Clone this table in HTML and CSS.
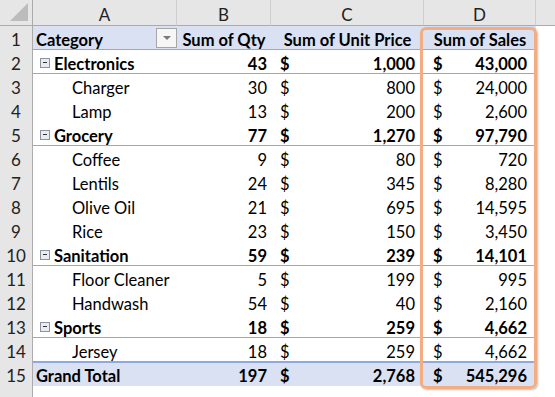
FILE: index.html
```html
<!DOCTYPE html>
<html lang="en">
<head>
    <meta charset="UTF-8">
    <title>Pivot table - Sum of Sales</title>
    <link rel="stylesheet" href="styles.css">
</head>
<body>
    <div class="sheet">
        <div class="row colhead">
            <div class="corner"><span class="tri"></span></div>
            <div class="ch">A</div>
            <div class="ch">B</div>
            <div class="ch">C</div>
            <div class="ch">D</div>
            <div class="ch last"></div>
        </div>

        <div class="row head line">
            <div class="rn">1</div>
            <div class="c field">Category <span class="filter"><span class="arrow"></span></span></div>
            <div class="c hd">Sum of Qty</div>
            <div class="c hd">Sum of Unit Price</div>
            <div class="c hd">Sum of Sales</div>
            <div class="e"></div>
        </div>

        <div class="row group line">
            <div class="rn">2</div>
            <div class="c label"><span class="minus"></span>Electronics</div>
            <div class="c num">43</div>
            <div class="c money"><span>$</span><span>1,000</span></div>
            <div class="c money"><span>$</span><span>43,000</span></div>
            <div class="e"></div>
        </div>
        <div class="row">
            <div class="rn">3</div>
            <div class="c item">Charger</div>
            <div class="c num">30</div>
            <div class="c money"><span>$</span><span>800</span></div>
            <div class="c money"><span>$</span><span>24,000</span></div>
            <div class="e"></div>
        </div>
        <div class="row">
            <div class="rn">4</div>
            <div class="c item">Lamp</div>
            <div class="c num">13</div>
            <div class="c money"><span>$</span><span>200</span></div>
            <div class="c money"><span>$</span><span>2,600</span></div>
            <div class="e"></div>
        </div>

        <div class="row group line">
            <div class="rn">5</div>
            <div class="c label"><span class="minus"></span>Grocery</div>
            <div class="c num">77</div>
            <div class="c money"><span>$</span><span>1,270</span></div>
            <div class="c money"><span>$</span><span>97,790</span></div>
            <div class="e"></div>
        </div>
        <div class="row">
            <div class="rn">6</div>
            <div class="c item">Coffee</div>
            <div class="c num">9</div>
            <div class="c money"><span>$</span><span>80</span></div>
            <div class="c money"><span>$</span><span>720</span></div>
            <div class="e"></div>
        </div>
        <div class="row">
            <div class="rn">7</div>
            <div class="c item">Lentils</div>
            <div class="c num">24</div>
            <div class="c money"><span>$</span><span>345</span></div>
            <div class="c money"><span>$</span><span>8,280</span></div>
            <div class="e"></div>
        </div>
        <div class="row">
            <div class="rn">8</div>
            <div class="c item">Olive Oil</div>
            <div class="c num">21</div>
            <div class="c money"><span>$</span><span>695</span></div>
            <div class="c money"><span>$</span><span>14,595</span></div>
            <div class="e"></div>
        </div>
        <div class="row">
            <div class="rn">9</div>
            <div class="c item">Rice</div>
            <div class="c num">23</div>
            <div class="c money"><span>$</span><span>150</span></div>
            <div class="c money"><span>$</span><span>3,450</span></div>
            <div class="e"></div>
        </div>

        <div class="row group line">
            <div class="rn">10</div>
            <div class="c label"><span class="minus"></span>Sanitation</div>
            <div class="c num">59</div>
            <div class="c money"><span>$</span><span>239</span></div>
            <div class="c money"><span>$</span><span>14,101</span></div>
            <div class="e"></div>
        </div>
        <div class="row">
            <div class="rn">11</div>
            <div class="c item">Floor Cleaner</div>
            <div class="c num">5</div>
            <div class="c money"><span>$</span><span>199</span></div>
            <div class="c money"><span>$</span><span>995</span></div>
            <div class="e"></div>
        </div>
        <div class="row">
            <div class="rn">12</div>
            <div class="c item">Handwash</div>
            <div class="c num">54</div>
            <div class="c money"><span>$</span><span>40</span></div>
            <div class="c money"><span>$</span><span>2,160</span></div>
            <div class="e"></div>
        </div>

        <div class="row group line">
            <div class="rn">13</div>
            <div class="c label"><span class="minus"></span>Sports</div>
            <div class="c num">18</div>
            <div class="c money"><span>$</span><span>259</span></div>
            <div class="c money"><span>$</span><span>4,662</span></div>
            <div class="e"></div>
        </div>
        <div class="row line">
            <div class="rn">14</div>
            <div class="c item">Jersey</div>
            <div class="c num">18</div>
            <div class="c money"><span>$</span><span>259</span></div>
            <div class="c money"><span>$</span><span>4,662</span></div>
            <div class="e"></div>
        </div>

        <div class="row total">
            <div class="rn">15</div>
            <div class="c">Grand Total</div>
            <div class="c num">197</div>
            <div class="c money"><span>$</span><span>2,768</span></div>
            <div class="c money"><span>$</span><span>545,296</span></div>
            <div class="e"></div>
        </div>

        <div class="row">
            <div class="rn"></div>
        </div>

        <!-- highlight round the Sum of Sales column -->
        <div class="highlight"></div>
    </div>
</body>
</html>
```

FILE: styles.css
```css
body {
    margin: 0;
    background: #ffffff;
    font-family: Lato, "Open Sans", sans-serif;
    font-size: 16.5px;
    color: #000000;
}
.sheet {
    position: relative;
    width: 555px;
    height: 397px;
    overflow: hidden;
}

.row {
    display: grid;
    grid-template-columns: 33px 144px 94px 153px 112px 1fr;
    height: 24px;
}
.row > * {
    box-sizing: border-box;
    height: 24px;
    padding-top: 2px;
    line-height: 24px;
    white-space: nowrap;
}

/* column letters */
.colhead {
    height: 26px;
}
.colhead > * {
    height: 26px;
    line-height: 26px;
    background: #e6e6e6;
    border-bottom: 1px solid #ababab;
    border-right: 1px solid #cfcfcf;
    text-align: center;
    font-size: 17px;
    color: #222222;
}
.colhead .last {
    border-right: none;
}
.corner {
    position: relative;
    border-right-color: #ababab !important;
}
.corner .tri {
    position: absolute;
    right: 4px;
    bottom: 4px;
    width: 0;
    height: 0;
    border-left: 18px solid transparent;
    border-bottom: 18px solid #bcbcbc;
}

/* row numbers */
.rn {
    background: #e6e6e6;
    border-right: 1px solid #ababab;
    text-align: center;
    font-size: 17px;
    color: #222222;
}

.c {
    padding-left: 3px;
    padding-right: 3px;
}
.line .c {
    border-bottom: 1px solid #8ea9db;
}
.head .c,
.total .c {
    background: #d9e1f2;
    font-weight: 700;
}
.total .c {
    border-top: 1px solid #8ea9db;
    padding-top: 1px;
}
.head .hd {
    text-align: center;
    padding-left: 0;
    padding-right: 0;
}
.field {
    display: flex;
    justify-content: space-between;
    align-items: flex-start;
    padding-right: 0;
}
.filter {
    display: flex;
    justify-content: center;
    align-items: center;
    width: 21px;
    height: 20px;
    background: #f6f6f6;
    border: 1px solid #a6a6a6;
    box-sizing: border-box;
}
.filter .arrow {
    width: 0;
    height: 0;
    border-left: 4px solid transparent;
    border-right: 4px solid transparent;
    border-top: 4px solid #7a7a7a;
}

.group .c {
    font-weight: 700;
}
.label {
    display: flex;
    align-items: flex-start;
    padding-left: 7px;
}
.minus {
    position: relative;
    flex: none;
    width: 10px;
    height: 10px;
    margin-top: 6px;
    margin-right: 4px;
    box-sizing: border-box;
    border: 1px solid #8b93a3;
    background: #e8ebf0;
}
.minus::after {
    content: "";
    position: absolute;
    left: 2px;
    top: 3px;
    width: 4px;
    height: 1px;
    background: #333333;
}
.item {
    padding-left: 39px;
}
.num {
    text-align: right;
    padding-right: 4px;
}
.money {
    display: flex;
    justify-content: space-between;
    padding-left: 9px;
    padding-right: 9px;
}

.highlight {
    position: absolute;
    left: 420px;
    top: 27px;
    width: 117px;
    height: 362px;
    box-sizing: border-box;
    border: 3px solid #f2ae82;
    border-radius: 6px;
    box-shadow: 1px 1px 2px rgba(0, 0, 0, .25);
    pointer-events: none;
}
```
